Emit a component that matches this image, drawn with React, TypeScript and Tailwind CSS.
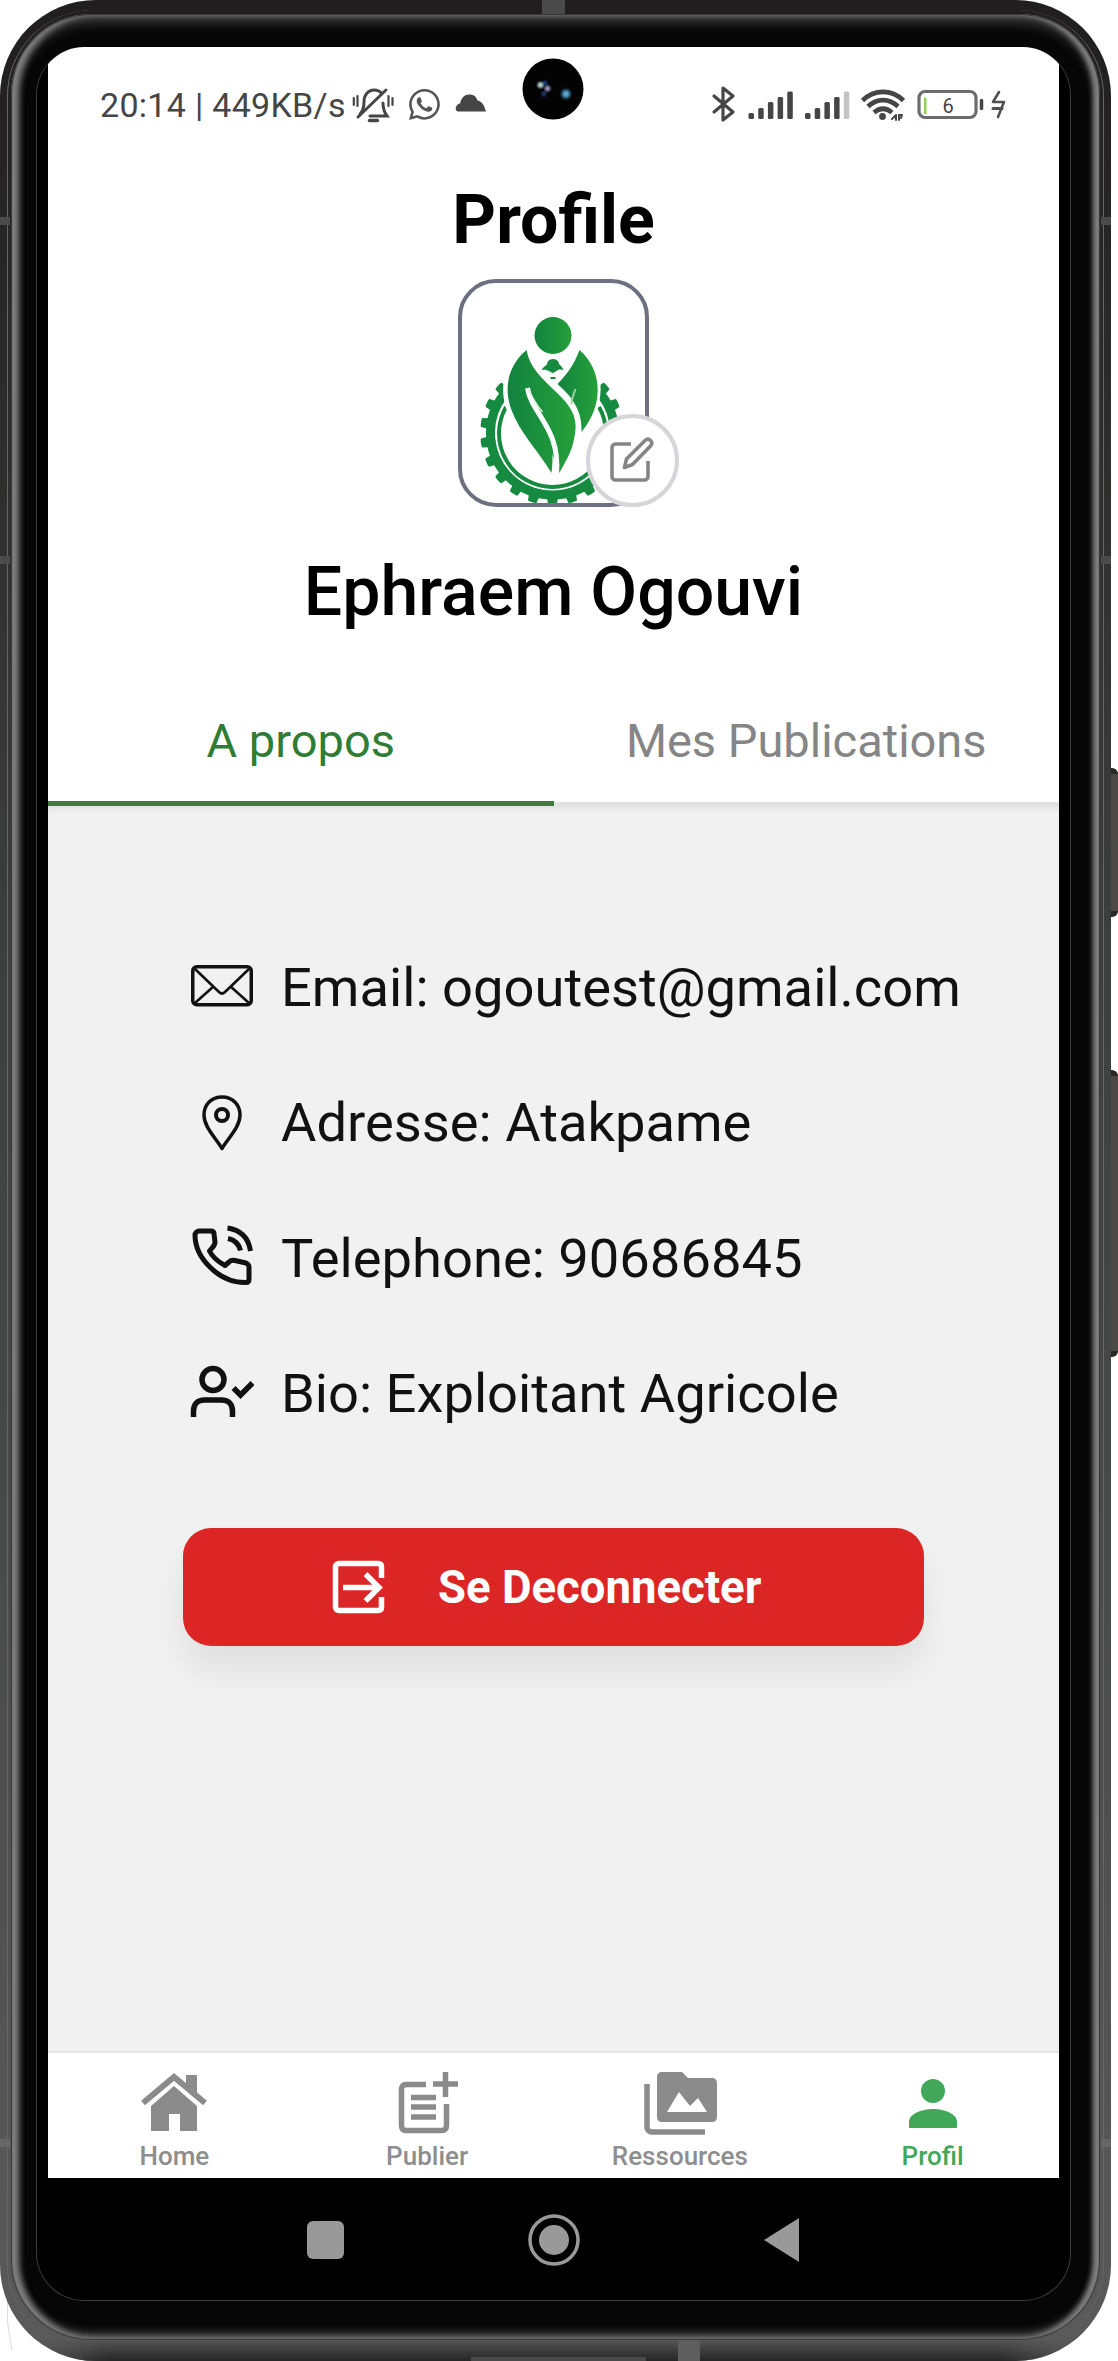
import React from "react";
import { BsWhatsapp } from "react-icons/bs";

function SideMark({ place }: { place: string }) {
  return <div className={`absolute h-[8px] w-[10px] bg-[#4b4b4b] ${place}`} />;
}

function CameraDot() {
  return (
    <svg className="absolute left-[522px] top-[58px] size-[62px]" viewBox="0 0 62 62">
      <defs>
        <radialGradient id="lens">
          <stop offset="0" stopColor="#6fb6e0" />
          <stop offset="0.4" stopColor="#3d7fa8" />
          <stop offset="1" stopColor="#030506" stopOpacity="0" />
        </radialGradient>
        <radialGradient id="glintA">
          <stop offset="0.3" stopColor="#a9c4bf" />
          <stop offset="1" stopColor="#a9c4bf" stopOpacity="0" />
        </radialGradient>
        <radialGradient id="glintB">
          <stop offset="0.2" stopColor="#9a93bd" />
          <stop offset="1" stopColor="#9a93bd" stopOpacity="0" />
        </radialGradient>
        <radialGradient id="glintC">
          <stop offset="0.2" stopColor="#17386c" />
          <stop offset="1" stopColor="#17386c" stopOpacity="0" />
        </radialGradient>
      </defs>
      <circle cx="31" cy="31" r="30.500" fill="#030304" />
      <circle cx="23" cy="25" r="4" fill="url(#glintC)" />
      <circle cx="22" cy="36" r="4" fill="url(#glintC)" />
      <circle cx="18.500" cy="27" r="4.500" fill="url(#glintA)" />
      <circle cx="25.500" cy="30.500" r="4.500" fill="url(#glintB)" />
      <circle cx="44" cy="36" r="7.500" fill="url(#lens)" />
    </svg>
  );
}

function StatusIconsLeft() {
  return (
    <svg className="h-[40px] w-[140px]" viewBox="353 84 140 40" fill="none" stroke="#454545" strokeWidth="3" strokeLinecap="round">
      <path d="M361 113c3-3 4-7 4-12 0-7 4-12 10-12 3 0 6 1 8 4M371 115h17c-3-4-4-7-4-13M359 116l28-27" />
      <path d="M370.500 119.500h8" strokeWidth="3.400" />
      <path d="M354.800 97v7M358.500 95v10M389.500 95v10M393.500 97v7" strokeWidth="2.200" />
      <path stroke="none" fill="#454545" d="M459 110.500c-4-1-2.500-7 2-8 1-5 4-9 9-9 5 0 7 2 8.500 6 5 1 7 6 8.500 11z" />
    </svg>
  );
}

function StatusIconsRight() {
  const bars = [6, 11, 17, 22, 27.5];
  return (
    <svg className="h-[44px] w-[300px]" viewBox="708 82 300 44" fill="none" stroke="#454545" strokeLinecap="round" strokeLinejoin="round">
      <path d="M715 95l19 16-10 8V87l10 8-19 16" strokeWidth="3.200" />
      {bars.map((h, i) => (
        <rect key={h} x={749.5 + i * 9.7} y={118 - h} width="5.500" height={h} rx="1.500" fill="#454545" stroke="none" />
      ))}
      {bars.map((h, i) => (
        <rect key={h} x={806 + i * 9.7} y={118 - h} width="5.500" height={h} rx="1.500" fill={i === 4 ? "#c4c4c4" : "#454545"} stroke="none" />
      ))}
      <g strokeWidth="4.600" strokeLinecap="butt">
        <path d="M863.500 99.500c12-11.500 29-11.500 41 0" />
        <path d="M869 105.500c9-8.500 21-8.500 30 0" />
        <path d="M875 111.500c6-5 12-5 18 0" />
      </g>
      <circle cx="883.500" cy="115.500" r="3.400" fill="#454545" stroke="none" />
      <path d="M893 118l4-4v5M900 119v-5h3l-1 3" strokeWidth="2" />
      <rect x="920" y="90.500" width="57" height="26" rx="6" stroke="#6c6c6c" strokeWidth="3.200" />
      <rect x="925" y="96.500" width="2.500" height="16.500" fill="#8fd05a" stroke="none" />
      <path d="M982.500 99.500v8" strokeWidth="3.500" />
      <text x="949" y="111.500" textAnchor="middle" fontSize="20" fontFamily="Roboto, sans-serif" fill="#454545" stroke="none">6</text>
      <path d="M1000 91l-6 10h11l-6 15" strokeWidth="2.600" stroke="#505050" />
      <path d="M994 107.500h9" strokeWidth="3" stroke="#505050" />
    </svg>
  );
}

function LogoArt() {
  const teeth = [0, 16.4, 32.8, 49.2, 65.6, 82, 98.4, 114.8, 131, -16.4, -32.8, -49.2, -65.6, -82, -98.4, -114.8, -131];
  return (
    <svg className="h-full w-full" viewBox="461.500 283 183 220">
      <defs>
        <linearGradient id="leaf" x1="0" x2="1">
          <stop offset="0" stopColor="#12833f" />
          <stop offset="1" stopColor="#26a03a" />
        </linearGradient>
        <clipPath id="card">
          <rect x="461.500" y="283" width="183" height="220" rx="34" />
        </clipPath>
      </defs>
      <g clipPath="url(#card)">
        <g fill="none" stroke="#168b40">
          <path d="M503 395A62 62 0 1 0 601 395" strokeWidth="9" />
          <path d="M505.500 407A53.500 53.500 0 1 0 598.500 407" strokeWidth="4" />
        </g>
        <g fill="#168b40">
          {teeth.map((a) => (
            <path key={a} d="M544.500 498l2-1 1 7.500c0 1 9 1 9 0l1-7.500 2 1v-5h-15z" transform={`rotate(${a} 552 433)`} />
          ))}
        </g>
        <g stroke="#fff" strokeWidth="9" strokeLinejoin="round" fill="#fff">
          <path d="M526 350c-19 16-23 39-15 60 8 22 24 39 40 63 7-31 20-37 22-62 1-23-39-35-47-61z" />
          <path d="M580 350c-7 14-16 24-25 33 17 15 26 29 24 49 22-23 22-65 1-82z" />
        </g>
        <path fill="url(#leaf)" d="M579 350c-5 14-13 25-22 34 16 14 25 28 24 48 22-26 22-61-2-82z" />
        <path fill="url(#leaf)" d="M526 350c-19 16-23 39-15 60 8 22 26 40 40 63 1-8 1-14 1-19 2 8 6 14 7 19 7-14 14-22 16-44 3-33-43-44-49-79z" />
        <path d="M527 388c4 26 33 40 29 86" stroke="#fff" strokeWidth="5" fill="none" />
        <path d="M527 388c5 10 9 17 15 24" stroke="#dff0e0" strokeWidth="1.500" fill="none" />
        <path d="M571 404c0-6 2-9 4-15" stroke="#9bd0a0" strokeWidth="2" fill="none" />
        <circle cx="552.500" cy="335.500" r="18.500" fill="url(#leaf)" />
        <path fill="#168b40" d="M547 362c2-4 9-4 11 0 0 3 3 3 5 8-6-2-7 2-11 3-3-1-5-4-11-3 2-4 6-4 6-8z" />
        <path d="M550 378h5" stroke="#168b40" strokeWidth="2" />
      </g>
    </svg>
  );
}

function EditIcon() {
  return (
    <svg className="size-[48px]" viewBox="1 1 48 48" fill="none" stroke="#858585" strokeWidth="3.600" strokeLinejoin="round">
      <path d="M23 8H7.500C5.500 8 4 9.500 4 11.500v29C4 42.500 5.500 44 7.500 44h29c2 0 3.500-1.500 3.500-3.500V25" />
      <path d="M16.500 31.500l2-8.500L37 4.500c4-3.500 9 1.500 5.500 5.500L24.500 28.500z" />
    </svg>
  );
}

function MailIcon() {
  return (
    <svg className="h-[42px] w-[62px]" viewBox="0 0 62 42" fill="none" stroke="#111" strokeWidth="3.500" strokeLinejoin="round">
      <rect x="1.750" y="1.750" width="58.500" height="38" rx="4" />
      <path d="M4 4l24 23c2 2 4 2 6 0L58 4M4 38l19-17M58 38L39 21" strokeWidth="2.600" />
    </svg>
  );
}

function PinIcon() {
  return (
    <svg className="h-[56px] w-[40px]" viewBox="0 0 40 56" fill="none" stroke="#111" strokeWidth="3.500" strokeLinejoin="round">
      <path d="M20 2C9 2 2 10 2 20c0 12 11 22 18 33.500C27 42 38 32 38 20 38 10 31 2 20 2z" />
      <circle cx="20" cy="20" r="6" strokeWidth="4" />
    </svg>
  );
}

function PhoneIcon() {
  return (
    <svg className="h-[62px] w-[62px]" viewBox="0 0 62 62" fill="none" stroke="#111" strokeWidth="5" strokeLinejoin="round" strokeLinecap="round">
      <path d="M8 6h12c2 0 3 1 3 3l1 8c0 3-1 4-3 6l-2.500 3c3 6 9 11 15.500 14.500l4-3.500c2-2 4-2 6-1.500l11 2.500c2 1 3 2 3 4v12c0 2-1 3.500-3 3.500C28 58 4 33 4 10c0-2 2-4 4-4z" />
      <path d="M36.500 3c14 2 21 10 23 23M37 13.500c7 1.500 11 5.500 12.500 12" strokeLinecap="butt" />
    </svg>
  );
}

function UserCheckIcon() {
  return (
    <svg className="h-[54px] w-[64px]" viewBox="0 0 64 54" fill="none" stroke="#111" strokeWidth="5.500">
      <circle cx="23" cy="14.500" r="11" />
      <path d="M3.500 52V46c0-7 4-11 11-11h17c7 0 11 4 11 11v6" />
      <path d="M43.500 23l7 7 12-12" />
    </svg>
  );
}

const details = [
  { text: "Email: ogoutest@gmail.com", icon: <MailIcon />, lift: "pb-[4px]" },
  { text: "Adresse: Atakpame", icon: <PinIcon />, lift: "pb-[1px]" },
  { text: "Telephone: 90686845", icon: <PhoneIcon />, lift: "pb-[6px]" },
  { text: "Bio: Exploitant Agricole", icon: <UserCheckIcon />, lift: "pb-[4px]" },
];

function ExitIcon() {
  return (
    <svg className="h-[54px] w-[54px]" viewBox="0 0 54 54" fill="none" stroke="#fff" strokeWidth="5.500">
      <path d="M49.500 18V7c0-2-1-3.500-3.500-3.500H7C5 3.500 3.500 5 3.500 7v40c0 2 1.500 3.500 3.500 3.500h39c2.500 0 3.500-1.500 3.500-3.500V37" />
      <path d="M11 27.500h36M33.500 14l13.500 13.500L33.500 41" />
    </svg>
  );
}

function HomeIcon() {
  return (
    <svg className="h-[66px] w-[68px]" viewBox="0 0 68 66" fill="#8b8b8b">
      <path d="M3 32L34 6l31 26" fill="none" stroke="#8b8b8b" strokeWidth="6" />
      <path d="M46 4h11v22L46 17zM34 15l23 20v25H40V43H29v17H11V35z" />
    </svg>
  );
}

function PublishIcon() {
  return (
    <svg className="h-[66px] w-[68px]" viewBox="0 0 68 66" fill="none" stroke="#8b8b8b" strokeWidth="5.500">
      <path d="M33 13.500H13c-3 0-4.500 2-4.500 4.500v37c0 3 2 4.500 4.500 4.500h36c3 0 4.500-2 4.500-4.500V33" strokeLinejoin="round" />
      <path d="M18 26.500h25M18 36h25M18 46h25M40 13h25M52.500 1v25" />
    </svg>
  );
}

function ResourcesIcon() {
  return (
    <svg className="h-[66px] w-[76px]" viewBox="0 0 76 66" fill="#8b8b8b">
      <path d="M5 13v43c0 3 2 5 5 5h53" fill="none" stroke="#8b8b8b" strokeWidth="5.500" />
      <path fillRule="evenodd" d="M20 1h20l6 6h24c3 0 5 2 5 5v34c0 3-2 5-5 5H20c-3 0-5-2-5-5V6c0-3 2-5 5-5zM25 41h40L56 27l-8 8-11-14z" />
    </svg>
  );
}

function ProfileIcon() {
  return (
    <svg className="h-[66px] w-[68px]" viewBox="0 0 68 66" fill="#41a85a">
      <circle cx="34" cy="20" r="12" />
      <path d="M10 57v-6c0-8 12-13 24-13s24 5 24 13v6z" />
    </svg>
  );
}

const navItems = [
  { label: "Home", icon: <HomeIcon />, color: "text-[#8e8e8e]" },
  { label: "Publier", icon: <PublishIcon />, color: "text-[#8e8e8e]" },
  { label: "Ressources", icon: <ResourcesIcon />, color: "text-[#8e8e8e]" },
  { label: "Profil", icon: <ProfileIcon />, color: "text-[#41a85a]" },
];

export default function App() {
  return (
    <div className="relative h-[2361px] w-[1118px] overflow-hidden bg-white font-['Roboto',sans-serif]">
      <div className="absolute right-0 top-[768px] h-[149px] w-[12px] rounded-r-[6px] border-y-[6px] border-[#292725] bg-[#4c4a48]" />
      <div className="absolute right-0 top-[1070px] h-[287px] w-[12px] rounded-r-[6px] border-y-[6px] border-[#292725] bg-[#4c4a48]" />
      <svg className="absolute bottom-0 left-0 h-[100px] w-[20px]" viewBox="0 0 20 100" fill="none" stroke="#ddd">
        <path d="M7.500 0v60q1 8 4.500 30" />
      </svg>
      <div className="relative h-[2361px] w-[1111px] overflow-hidden rounded-[96px] bg-linear-to-b from-[#201e1e] via-[#3d3f3e] via-40% to-[#5a5a5a] px-[11px] pb-[21px] pt-[14px]">
        <div className="absolute inset-x-0 bottom-0 h-[21px] bg-linear-to-b from-[#555] to-[#262626] [mask-image:linear-gradient(to_right,transparent_30px,#000_110px,#000_1000px,transparent_1080px)]" />
        <div className="absolute inset-x-[7px] inset-y-[10px] rounded-[86px] border-x border-[#666]" />
        <div className="absolute left-[542px] top-0 h-[14px] w-[23px] bg-[#4a4a4a]" />
        <SideMark place="left-0 top-[217px]" />
        <SideMark place="right-0 top-[217px]" />
        <SideMark place="left-0 top-[556px]" />
        <SideMark place="right-0 top-[556px]" />
        <div className="absolute left-0 top-[2139px] h-[8px] w-[10px] bg-[#676767]" />
        <div className="absolute right-0 top-[2139px] h-[8px] w-[10px] bg-[#676767]" />
        <div className="absolute bottom-0 left-[678px] h-[21px] w-[22px] bg-[#5e5e5e]" />
        <div className="absolute bottom-0 left-[471px] h-[4px] w-[175px] bg-[#4a4a4a]" />

        <div className="relative h-[2326px] rounded-[80px] bg-[#060606] pl-[25px] pr-[29px] pt-[33px] shadow-[inset_0_0_1px_1px_#333,inset_8px_0_6px_#808080,inset_-7px_0_5px_#808080,inset_0_7px_14px_#4a4a4a,inset_0_-6px_10px_#606060]">
          <div className="h-[2254px] overflow-hidden rounded-[48px] border-x border-b border-[#3c3c3c] bg-black px-[11px]">
            <div className="flex h-[2131px] flex-col bg-white">
              <header className="flex h-[116px] shrink-0 items-center justify-between pl-[52px] pr-[52px]">
                <div className="relative flex items-center">
                  <span className="whitespace-nowrap text-[34px] leading-[40px] tracking-[0.3px] text-[#454545]">20:14 | 449KB/s</span>
                  <span className="ml-[6px] flex"><StatusIconsLeft /></span>
                  <BsWhatsapp className="absolute right-[52px] top-[4px] size-[31px] text-[#555]" />
                </div>
                <StatusIconsRight />
              </header>

              <h1 className="-mt-[3px] text-center text-[68px] font-bold leading-[120px]">Profile</h1>
              <div className="relative mx-auto -mt-[1px] h-[228px] w-[191px] shrink-0 rounded-[38px] border-[4px] border-[#6c7080]">
                <LogoArt />
                <div className="absolute -bottom-[4px] -right-[34px] flex size-[93px] items-center justify-center rounded-full border-[4px] border-[#d6d6da] bg-white">
                  <EditIcon />
                </div>
              </div>
              <h2 className="mt-[41px] text-center text-[68px] font-medium leading-[88px]">Ephraem Ogouvi</h2>

              <div className="mt-auto grid h-[160px] shrink-0 grid-cols-2 text-center text-[47px] leading-[60px]">
                <div className="border-b-[5px] border-[#3d7c40] pt-[65px] text-[#2f7d34]">A propos</div>
                <div className="border-b-[4px] border-[#e2e2e2] pt-[65px] text-[#858585]">Mes Publications</div>
              </div>

              <main className="h-[1245px] shrink-0 bg-[#f1f1f1] px-[135px] pt-[114px] shadow-[inset_0_6px_6px_-4px_#ddd]">
                <div className="flex flex-col">
                  {details.map((d) => (
                    <div key={d.text} className="flex h-[135.500px] items-center">
                      <span className={`flex w-[78px] shrink-0 justify-center ${d.lift}`}>{d.icon}</span>
                      <span className="ml-[20px] whitespace-nowrap text-[54.300px] leading-[64px] text-[#111]">{d.text}</span>
                    </div>
                  ))}
                </div>
                <button className="mt-[66px] flex h-[118px] w-[741px] items-center rounded-[28px] bg-[#dc2626] pl-[149px] font-bold text-white shadow-[0_24px_36px_rgba(0,0,0,0.07)]">
                  <ExitIcon />
                  <span className="ml-[52px] pt-[3px] text-[45.500px]">Se Deconnecter</span>
                </button>
              </main>

              <nav className="grid h-[127px] shrink-0 grid-cols-4 border-t-2 border-[#e5e5e5] bg-white">
                {navItems.map((n) => (
                  <div key={n.label} className={`flex flex-col items-center pt-[18px] ${n.color}`}>
                    {n.icon}
                    <span className="mt-[4px] text-[26px] font-medium leading-[30px]">{n.label}</span>
                  </div>
                ))}
              </nav>
            </div>
            <div className="flex h-[123px] items-center justify-center">
              <svg className="h-[60px] w-[500px]" viewBox="0 0 500 60" fill="#999">
                <rect x="3" y="11" width="37" height="38" rx="6" />
                <circle cx="250" cy="30" r="24" fill="none" stroke="#999" strokeWidth="3.500" />
                <circle cx="250" cy="30" r="15" />
                <path d="M460 30l35-22v44z" />
              </svg>
            </div>
          </div>
        </div>
        <CameraDot />
      </div>
    </div>
  );
}
